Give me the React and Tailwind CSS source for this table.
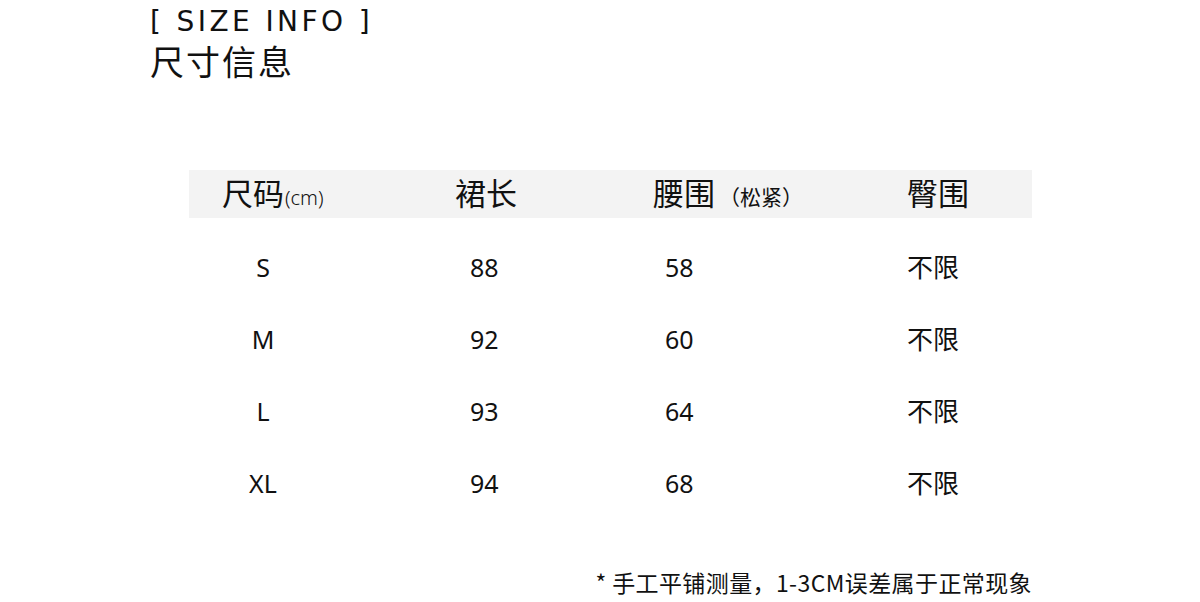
import React from 'react'

const cjk = { fontFamily: '"Noto Sans CJK SC", "Noto Sans", sans-serif' }
const latin = { fontFamily: '"Noto Sans", "Noto Sans CJK SC", sans-serif' }

const rows = [
  { size: 'S', len: '88', waist: '58', hip: '不限' },
  { size: 'M', len: '92', waist: '60', hip: '不限' },
  { size: 'L', len: '93', waist: '64', hip: '不限' },
  { size: 'XL', len: '94', waist: '68', hip: '不限' },
]

const App = () => {
  return (
    <div className="relative h-[602px] w-[1200px] overflow-hidden bg-white text-[#111]">
      <div className="pl-[150px] pt-[5px]">
        <p
          className="text-[28px] leading-[34px] tracking-[3.4px]"
          style={{ fontFamily: '"DejaVu Sans", sans-serif', fontWeight: 400 }}
        >
          [ SIZE INFO ]
        </p>
        <p className="mt-[2px] text-[34px] leading-[40px] tracking-[2px]" style={cjk}>
          尺寸信息
        </p>
      </div>

      <div className="ml-[189px] mt-[89px] w-[843px]">
        <div className="flex h-[48px] items-center bg-[#f3f3f3] pb-[4px] text-[31px]" style={cjk}>
          <div className="w-[231px] pl-[33px]">
            尺码<span className="ml-[1px] text-[20px] font-light" style={latin}>(cm)</span>
          </div>
          <div className="w-[198px] pl-[35px]">裙长</div>
          <div className="w-[254px] pl-[35px]">
            腰围<span className="ml-[4px] text-[21px]">（松紧）</span>
          </div>
          <div className="flex-1 pl-[35px]">臀围</div>
        </div>

        <div className="mt-[14px]">
          {rows.map((r) => (
            <div key={r.size} className="flex h-[72px] items-center text-[25px]">
              <div className="w-[231px] pl-[57px]" style={latin}>
                <span className="inline-block w-[34px] text-center">{r.size}</span>
              </div>
              <div className="w-[198px] pl-[50px]" style={latin}>{r.len}</div>
              <div className="w-[254px] pl-[47px]" style={latin}>{r.waist}</div>
              <div className="flex-1 pb-[5px] pl-[35px] text-[26px]" style={cjk}>{r.hip}</div>
            </div>
          ))}
        </div>
      </div>

      <p
        className="absolute right-[168px] top-[566px] text-[23px] leading-[32px] tracking-[0.4px]"
        style={cjk}
      >
        * 手工平铺测量，1-3CM误差属于正常现象
      </p>
    </div>
  )
}

export default App
